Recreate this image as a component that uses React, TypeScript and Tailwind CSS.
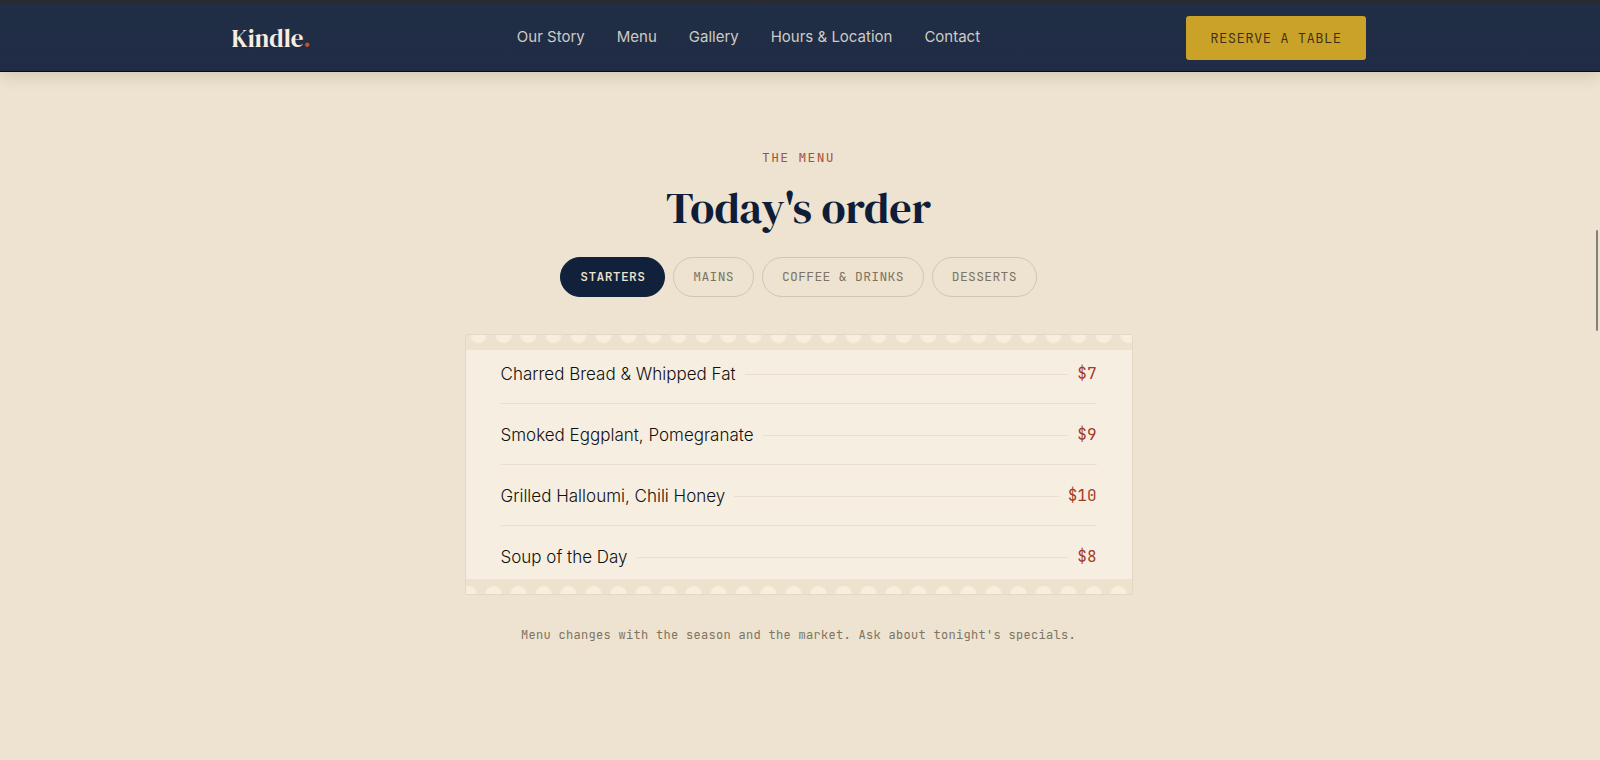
import { useState } from 'react'
import clsx from 'clsx'

const LINKS = ['Our Story', 'Menu', 'Gallery', 'Hours & Location', 'Contact']

const TABS = ['Starters', 'Mains', 'Coffee & Drinks', 'Desserts']

const ITEMS = [
  { name: 'Charred Bread & Whipped Fat', price: '$7' },
  { name: 'Smoked Eggplant, Pomegranate', price: '$9' },
  { name: 'Grilled Halloumi, Chili Honey', price: '$10' },
  { name: 'Soup of the Day', price: '$8' },
]

function Header() {
  return (
    <header className="border-t-4 border-b border-t-[#2c2b33] border-b-[#060a2c] bg-linear-to-b from-[#1f2f45] to-[#212b45] pr-[3px] shadow-[0_4px_14px_rgba(90,75,50,0.18)]">
      <div className="mx-auto flex h-[67px] max-w-[1134px] items-center justify-between pt-px">
        <a href="#top" className="font-['DM_Serif_Display','Liberation_Serif',serif] text-[25px] leading-8 text-[#f6eee0]">
          Kindle<span className="text-[#c4512d]">.</span>
        </a>
        <nav className="flex gap-8 pb-[3px]">
          {LINKS.map(link => (
            <a key={link} href="#menu" className="text-[15px] leading-5 font-normal text-[#cfccc3]">
              {link}
            </a>
          ))}
        </nav>
        <button className="h-11 rounded-[3px] bg-[#c9a227] px-6 font-['JetBrains_Mono','DejaVu_Sans_Mono',monospace] text-[14px] font-light tracking-wide text-[#3a2e1c] uppercase">
          Reserve a table
        </button>
      </div>
    </header>
  )
}

function MenuCard() {
  return (
    <div className="relative mt-[37px] w-full max-w-[668px] rounded-[2px] border border-[#e2d8c4] bg-[#f6efe1] px-[35px] py-2">
      {/* Scalloped paper edges */}
      <div className="absolute inset-x-0 top-0 h-[15px] bg-[radial-gradient(circle_at_50%_0,#f7eedd_7px,#ece2ce_9px)] bg-size-[25px_15px]" />
      <div className="absolute inset-x-0 bottom-0 h-[15px] bg-[radial-gradient(circle_at_50%_100%,#f7eedd_7px,#ece2ce_9px)] bg-size-[25px_15px] bg-position-[-10px_0]" />
      <ul>
        {ITEMS.map(item => (
          <li key={item.name} className="flex h-[61px] items-center gap-[9px] border-b border-[#e8dfd0] pt-[2px] last:h-[60px] last:border-b-0">
            <span className="text-[17px] leading-6 font-light text-[#12110f]">{item.name}</span>
            <span className="h-px flex-1 bg-[#e8dfd0]" />
            <span className="font-['JetBrains_Mono','DejaVu_Sans_Mono',monospace] text-[16px] leading-6 text-[#a33a25]">{item.price}</span>
          </li>
        ))}
      </ul>
    </div>
  )
}

export default function App() {
  const [active, setActive] = useState('Starters')

  return (
    <div id="top" className="min-h-screen bg-[#ede3d0] font-['Inter',sans-serif]">
      <Header />
      <main id="menu" className="flex flex-col items-center pt-[76px] pr-[3px] pb-24">
        <p className="font-['JetBrains_Mono','DejaVu_Sans_Mono',monospace] text-[13px] leading-5 tracking-widest text-[#a8503c] uppercase">The Menu</p>
        <h1 className="mt-3 font-['DM_Serif_Display','Liberation_Serif',serif] text-[44px] leading-[56px] text-[#0f1d38]">
          Today's order
        </h1>
        <div className="mt-[21px] flex gap-2">
          {TABS.map(tab => (
            <button
              key={tab}
              onClick={() => setActive(tab)}
              className={clsx(
                "h-10 rounded-full border px-[19px] font-['JetBrains_Mono','DejaVu_Sans_Mono',monospace] text-[13px] tracking-wide uppercase",
                active === tab
                  ? 'border-[#11203b] bg-[#11203b] font-medium text-[#ede3d0]'
                  : 'border-[#d0c6b4] text-[#7d7463]'
              )}
            >
              {tab}
            </button>
          ))}
        </div>
        <MenuCard />
        <p className="mt-[30px] font-['JetBrains_Mono','DejaVu_Sans_Mono',monospace] text-[12px] leading-5 tracking-wide text-[#7d7463]">
          Menu changes with the season and the market. Ask about tonight's specials.
        </p>
      </main>
      {/* Scroll thumb, floats over the page */}
      <div className="fixed top-[230px] right-[2px] h-[101px] w-[2px] rounded-full bg-[#85817a]" />
    </div>
  )
}
